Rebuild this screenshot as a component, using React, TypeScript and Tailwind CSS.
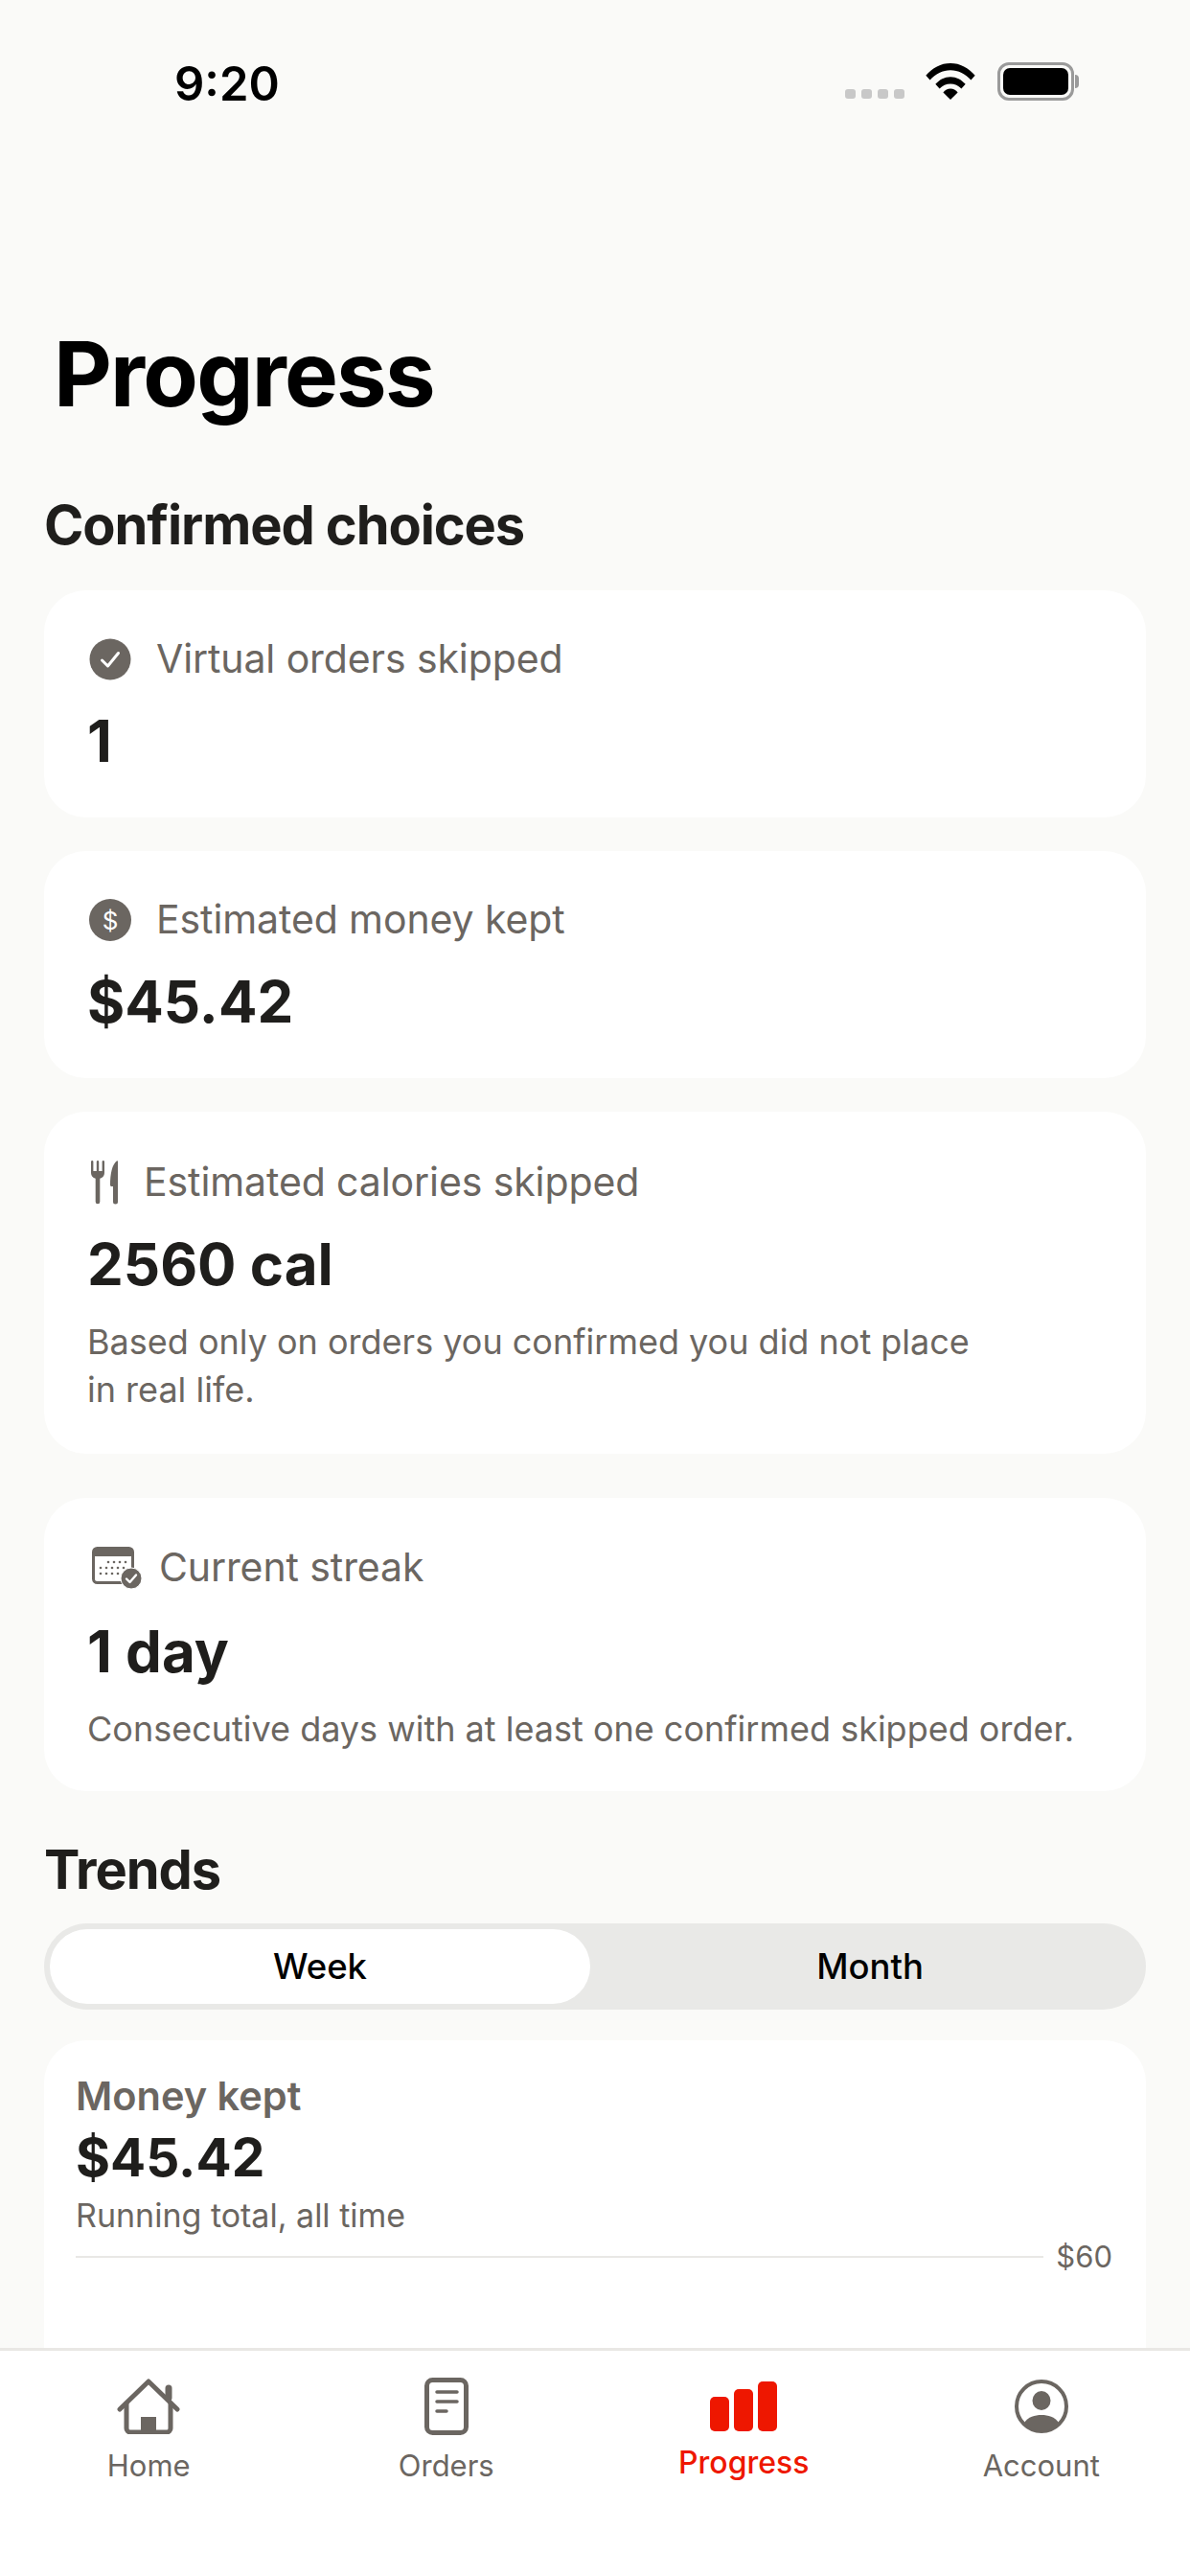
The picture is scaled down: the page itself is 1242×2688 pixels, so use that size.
const muted = "text-[#6b6661]";

function CheckCircle() {
  return (
    <svg viewBox="0 0 44 44" className="ml-[2px] h-[44px] w-[44px] shrink-0">
      <circle cx="22" cy="22" r="21.500" fill="#6b6661" />
      <path d="M13.500 23l6 6L30.500 15.500" fill="none" stroke="#fff" strokeWidth="3" strokeLinecap="round" strokeLinejoin="round" />
    </svg>
  );
}

function DollarCircle() {
  return (
    <div className="ml-[2px] flex h-[44px] w-[44px] shrink-0 items-center justify-center rounded-full bg-[#6b6661] text-[26px] text-white">$</div>
  );
}

function Cutlery() {
  return (
    <svg viewBox="0 0 28 46" className="ml-[4px] h-[46px] w-[28px] shrink-0" fill="#6b6661">
      <path d="M0 1.200a1.200 1.200 0 0 1 2.400 0V11h3.400V1.200a1.200 1.200 0 0 1 2.400 0V11h3.400V1.200a1.200 1.200 0 0 1 2.400 0V13c0 3-2 5-4.700 5.800V43a2.300 2.300 0 0 1-4.600 0V18.800C2 18 0 16 0 13z" />
      <path d="M28 1v42a2.500 2.500 0 0 1-5 0V27h-1.500c-.9 0-1.500-.7-1.500-1.500C20 14 22 4 27 .3c.5-.3 1 0 1 .7z" />
    </svg>
  );
}

function CalendarCheck() {
  return (
    <svg viewBox="0 0 52 44" className="ml-[5px] h-[44px] w-[52px] shrink-0">
      <rect x="1.500" y="1.500" width="41" height="36" rx="4" fill="#fff" stroke="#6b6661" strokeWidth="3" />
      <path d="M1.500 5.500a4 4 0 0 1 4-4h33a4 4 0 0 1 4 4V10h-41z" fill="#6b6661" />
      <g fill="#6b6661">
        {[17, 23, 29, 35].map((x) => <circle key={x} cx={x} cy="16" r="1.300" />)}
        {[9, 15, 21, 27, 33].map((x) => <circle key={x} cx={x} cy="22" r="1.300" />)}
        {[9, 15, 21, 27].map((x) => <circle key={x} cx={x} cy="28" r="1.300" />)}
      </g>
      <circle cx="41" cy="33" r="11" fill="#6b6661" stroke="#fff" strokeWidth="1" />
      <path d="M36 33.500l3.500 3.500 6.500-7.500" fill="none" stroke="#fff" strokeWidth="2.400" strokeLinecap="round" strokeLinejoin="round" />
    </svg>
  );
}

function HomeIcon() {
  return (
    <svg viewBox="0 0 66 58" className="h-[58px] w-[66px]" fill="none" stroke="#6b6661" strokeWidth="5" strokeLinecap="round" strokeLinejoin="round">
      <path d="M3 32L33 3l30 29" />
      <path d="M10 26v26a4 4 0 0 0 4 4h38a4 4 0 0 0 4-4V26" />
      <path d="M54 20V10" strokeWidth="7" strokeLinecap="round" />
      <rect x="25" y="40" width="16" height="16" fill="#6b6661" stroke="none" />
    </svg>
  );
}

function OrdersIcon() {
  return (
    <svg viewBox="0 0 46 60" className="h-[60px] w-[46px]" fill="none" stroke="#6b6661" strokeLinecap="round">
      <rect x="2.500" y="2.500" width="41" height="55" rx="6" strokeWidth="5" />
      <path d="M13 15h21M13 25h21M13 35h10" strokeWidth="3.500" />
    </svg>
  );
}

function BarsIcon() {
  return (
    <div className="flex h-[52px] items-end gap-[5px]">
      <div className="h-[36px] w-[20px] rounded-[5px] bg-[#ee1700]" />
      <div className="h-[44px] w-[20px] rounded-[5px] bg-[#ee1700]" />
      <div className="h-[52px] w-[20px] rounded-[5px] bg-[#ee1700]" />
    </div>
  );
}

function AccountIcon() {
  return (
    <svg viewBox="0 0 56 56" className="h-[56px] w-[56px]">
      <circle cx="28" cy="28" r="26" fill="#fff" stroke="#6b6661" strokeWidth="4" />
      <ellipse cx="28" cy="22" rx="9.500" ry="10" fill="#6b6661" />
      <path d="M10 45c4-6 11-8 18-8s14 2 18 8c-4.500 5.500-11 9-18 9s-13.500-3.500-18-9z" fill="#6b6661" />
    </svg>
  );
}

function Wifi() {
  return (
    <svg viewBox="0 0 54 40" className="h-[38px] w-[54px]" fill="#000">
      <path d="M0 13.500C7 5 16.500 0 27 0s20 5 27 13.500l-4.500 5C43.500 11.500 35.500 7.500 27 7.500S10.500 11.500 4.500 18.500z" />
      <path d="M10.500 23C15 18 20.500 15 27 15s12 3 16.500 8L39 28c-3-3.500-7.500-5.500-12-5.500S18 24.500 15 28z" />
      <path d="M19 32c2-2.500 5-4 8-4s6 1.500 8 4l-8 8z" />
    </svg>
  );
}

function StatusBar() {
  return (
    <div className="flex h-[172px] shrink-0 items-start justify-between pl-[182px] pr-[116px] pt-[59px]">
      <div className="text-[49px] font-semibold leading-[58px] text-black">9:20</div>
      <div className="flex items-center pt-[6px]">
        <div className="mr-[21px] mt-[26px] flex gap-[6px]">
          {[0, 1, 2, 3].map((i) => (
            <div key={i} className="h-[10px] w-[11px] rounded-[3px] bg-[#c8c8c8]" />
          ))}
        </div>
        <Wifi />
        <div className="ml-[22px] flex items-center">
          <div className="h-[40px] w-[80px] rounded-[12px] border-[3px] border-[#9a9a9a] p-[3px]">
            <div className="h-full w-full rounded-[7px] bg-black" />
          </div>
          <div className="ml-[1px] h-[14px] w-[4px] rounded-r-full bg-[#9a9a9a]" />
        </div>
      </div>
    </div>
  );
}

function StatCard({
  icon,
  label,
  value,
  note,
  gap,
  className,
  valueGap = "mt-[25px]",
}: {
  icon: React.ReactNode;
  label: string;
  value: string;
  note?: React.ReactNode;
  gap: string;
  className: string;
  valueGap?: string;
}) {
  return (
    <div className={`rounded-[44px] bg-white px-[45px] ${className}`}>
      <div className={`flex h-[50px] items-center ${gap}`}>
        {icon}
        <span className={`text-[41px] tracking-[-0.1px] ${muted}`}>{label}</span>
      </div>
      <div className={`${valueGap} h-[70px] text-[60px] font-bold leading-[70px] text-[#1f1e1c]`}>{value}</div>
      {note && <p className={`mt-[21px] text-[36px] leading-[50px] ${muted}`}>{note}</p>}
    </div>
  );
}

function NavItem({ icon, label, active }: { icon: React.ReactNode; label: string; active?: boolean }) {
  return (
    <div className="flex flex-col items-center">
      <div className="flex h-[60px] items-center justify-center">{icon}</div>
      <span className={`leading-[40px] ${active ? "mt-[9px] text-[32px] font-medium text-[#ee1700]" : `mt-[12px] text-[31px] ${muted}`}`}>{label}</span>
    </div>
  );
}

export default function App() {
  return (
    <div className="flex h-[2688px] w-[1242px] flex-col overflow-hidden bg-[#fafaf8] font-['Inter',sans-serif]">
      <StatusBar />

      <main className="min-h-0 flex-1 overflow-hidden px-[46px]">
        <h1 className="ml-[10px] mt-[163px] text-[94px] font-bold leading-[110px] tracking-[-1.8px] text-black">Progress</h1>
        <h2 className="mt-[69px] text-[56px] font-bold leading-[68px] tracking-[-1.1px] text-[#1f1e1c]">Confirmed choices</h2>

        <StatCard className="mt-[34px] h-[237px] pt-[47px]" gap="gap-[26px]" icon={<CheckCircle />} label="Virtual orders skipped" value="1" />
        <StatCard className="mt-[35px] h-[237px] pt-[47px]" gap="gap-[26px]" icon={<DollarCircle />} label="Estimated money kept" value="$45.42" />
        <StatCard
          className="mt-[35px] h-[357px] pt-[49px]"
          gap="gap-[27px]"
          icon={<Cutlery />}
          label="Estimated calories skipped"
          value="2560 cal"
          note={<>Based only on orders you confirmed you did not place<br />in real life.</>}
        />
        <StatCard
          className="mt-[46px] h-[306px] pt-[48px]"
          gap="gap-[18px]"
          icon={<CalendarCheck />}
          valueGap="mt-[27px]"
          label="Current streak"
          value="1 day"
          note="Consecutive days with at least one confirmed skipped order."
        />

        <h2 className="mt-[48px] text-[56px] font-bold leading-[68px] tracking-[-1.1px] text-[#1f1e1c]">Trends</h2>
        <div className="mt-[22px] flex h-[90px] rounded-full bg-[#e9e9e7] p-[6px]">
          <div className="flex w-[564px] items-center justify-center rounded-full bg-white text-[36.500px] font-medium text-black">Week</div>
          <div className="flex flex-1 items-center justify-center pl-[10px] text-[36.500px] font-medium text-black">Month</div>
        </div>

        <div className="mt-[32px] h-[420px] rounded-[44px] bg-white px-[33px] pt-[33px]">
          <div className={`text-[41.500px] font-semibold leading-[50px] ${muted}`}>Money kept</div>
          <div className="mt-[6px] text-[55px] font-bold leading-[66px] text-[#1f1e1c]">$45.42</div>
          <div className={`mt-[6px] text-[34px] leading-[44px] ${muted}`}>Running total, all time</div>
          <div className="mt-[3px] flex items-center gap-[13px]">
            <div className="h-[2px] flex-1 bg-[#e9e8e5]" />
            <span className={`mr-[2px] text-[31px] leading-[36px] ${muted}`}>$60</span>
          </div>
        </div>
      </main>

      <nav className="grid h-[238px] shrink-0 grid-cols-4 border-t-[3px] border-[#e9e7e4] bg-white pt-[28px]">
        <NavItem icon={<HomeIcon />} label="Home" />
        <NavItem icon={<OrdersIcon />} label="Orders" />
        <NavItem icon={<BarsIcon />} label="Progress" active />
        <NavItem icon={<AccountIcon />} label="Account" />
      </nav>
    </div>
  );
}
